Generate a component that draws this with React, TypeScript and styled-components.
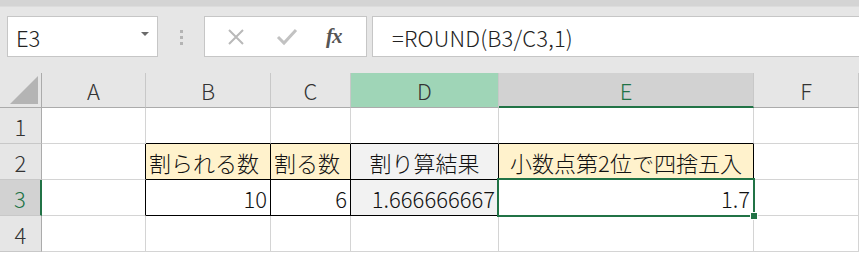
import styled, { createGlobalStyle } from 'styled-components'

const GlobalStyle = createGlobalStyle`
  html, body {
    margin: 0;
    padding: 0;
    background: #ffffff;
    overflow: hidden;
  }
  body {
    font-family: "Noto Sans CJK JP", "Noto Sans", sans-serif;
  }
`

const GREEN = '#217346'
const GRID = '#d4d4d4'

const Page = styled.div`
  width: 859px;
  height: 253px;
  display: flex;
  flex-direction: column;
  background: #e6e6e6;
`

const TopStrip = styled.div`
  height: 6px;
  background: #d4d4d4;
  border-bottom: 1px solid #dcdcdc;
`

const FormulaBar = styled.div`
  height: 66px;
  display: flex;
  align-items: flex-start;
  padding-top: 9px;
  box-sizing: border-box;
`

const NameBox = styled.div`
  margin-left: 7px;
  width: 151px;
  height: 41px;
  box-sizing: border-box;
  background: #ffffff;
  border: 1px solid #c6c6c6;
  display: flex;
  align-items: center;
  justify-content: space-between;
  padding: 0 8px 0 8px;
  font-size: 22px;
  font-weight: 300;
  color: #222;
`

const Caret = styled.span`
  width: 0;
  height: 0;
  border-left: 4px solid transparent;
  border-right: 4px solid transparent;
  border-top: 4px solid #6a6a6a;
  margin-top: -6px;
`

const Grip = styled.div`
  width: 46px;
  height: 41px;
  display: flex;
  flex-direction: column;
  align-items: center;
  justify-content: center;
  gap: 3px;
  padding-top: 2px;
  box-sizing: border-box;
`

const GripDot = styled.span`
  width: 3px;
  height: 3px;
  background: #b4b4b4;
`

const ButtonBox = styled.div`
  width: 163px;
  height: 41px;
  box-sizing: border-box;
  background: #ffffff;
  border: 1px solid #c6c6c6;
  display: flex;
  align-items: center;
  padding-left: 21px;
  gap: 30px;
`

const FxLabel = styled.span`
  font-family: "Liberation Serif", "DejaVu Serif", serif;
  font-style: italic;
  font-weight: bold;
  font-size: 21px;
  color: #555;
  margin-left: -2px;
  letter-spacing: -1px;
`

const FormulaInput = styled.div`
  margin-left: 5px;
  flex: 1;
  height: 41px;
  box-sizing: border-box;
  background: #ffffff;
  border: 1px solid #c6c6c6;
  border-right: none;
  display: flex;
  align-items: center;
  padding-left: 19px;
  font-size: 22px;
  font-weight: 300;
  color: #222;
  letter-spacing: 0.2px;
`

const Sheet = styled.div`
  flex: 1;
  display: grid;
  grid-template-columns: 42px 104px 125px 80px 148px 255px 1fr;
  grid-template-rows: 35px repeat(4, 36px);
  background: #ffffff;
`

const Corner = styled.div`
  background: #e6e6e6;
  border-right: 1px solid #ababab;
  border-bottom: 1px solid #ababab;
  position: relative;
  box-sizing: border-box;
`

const CornerTriangle = styled.div`
  position: absolute;
  right: 3px;
  bottom: 3px;
  width: 0;
  height: 0;
  border-left: 28px solid transparent;
  border-bottom: 28px solid #b4b4b4;
`

type HeadProps = { $state?: 'normal' | 'range' | 'active' }

const ColHead = styled.div<HeadProps>`
  box-sizing: border-box;
  display: flex;
  align-items: center;
  justify-content: center;
  font-size: 22px;
  font-weight: 300;
  background: ${(p) =>
    p.$state === 'range' ? '#9fd5b7' : p.$state === 'active' ? '#d2d2d2' : '#e6e6e6'};
  color: ${(p) => (p.$state === 'active' ? GREEN : '#333')};
  border-right: 1px solid #c8c8c8;
  border-bottom: ${(p) => (p.$state === 'active' ? `2px solid ${GREEN}` : '1px solid #ababab')};
`

const RowHead = styled.div<HeadProps>`
  box-sizing: border-box;
  display: flex;
  align-items: center;
  justify-content: center;
  font-size: 22px;
  font-weight: 300;
  background: ${(p) => (p.$state === 'active' ? '#d2d2d2' : '#e6e6e6')};
  color: ${(p) => (p.$state === 'active' ? GREEN : '#333')};
  border-bottom: 1px solid #c8c8c8;
  border-right: ${(p) => (p.$state === 'active' ? `2px solid ${GREEN}` : '1px solid #ababab')};
`

type CellProps = {
  $fill?: string
  $align?: 'left' | 'center' | 'right'
  $right?: string
  $bottom?: string
}

const Cell = styled.div<CellProps>`
  box-sizing: border-box;
  position: relative;
  display: flex;
  align-items: center;
  justify-content: ${(p) =>
    p.$align === 'right' ? 'flex-end' : p.$align === 'center' ? 'center' : 'flex-start'};
  padding: 0 3px;
  font-size: 22px;
  font-weight: 300;
  color: #111;
  white-space: nowrap;
  background: ${(p) => p.$fill || '#ffffff'};
  border-right: 1px solid ${(p) => p.$right || GRID};
  border-bottom: 1px solid ${(p) => p.$bottom || GRID};
`

const Selection = styled.div`
  position: absolute;
  z-index: 2;
  left: -2px;
  top: -2px;
  right: -2px;
  bottom: -2px;
  border: 2px solid ${GREEN};
  pointer-events: none;
`

const FillHandle = styled.div`
  position: absolute;
  z-index: 3;
  right: -5px;
  bottom: -5px;
  width: 6px;
  height: 6px;
  background: ${GREEN};
  border: 1px solid #ffffff;
`

const XIcon = () => (
  <svg width="20" height="20" viewBox="0 0 20 20">
    <path d="M3 3 L17 17 M17 3 L3 17" stroke="#b9b9b9" strokeWidth="2" fill="none" />
  </svg>
)

const CheckIcon = () => (
  <svg width="22" height="20" viewBox="0 0 22 20">
    <path d="M2 10 L8 16 L20 3" stroke="#c2c2c2" strokeWidth="3" fill="none" />
  </svg>
)

const BLACK = '#000000'
const YELLOW = '#fff2cc'
const GRAY = '#f2f2f2'

export default function App() {
  const cols = ['A', 'B', 'C', 'D', 'E', 'F']
  return (
    <>
      <GlobalStyle />
      <Page>
        <TopStrip />
        <FormulaBar>
          <NameBox>
            <span>E3</span>
            <Caret />
          </NameBox>
          <Grip>
            <GripDot />
            <GripDot />
            <GripDot />
          </Grip>
          <ButtonBox>
            <XIcon />
            <CheckIcon />
            <FxLabel>fx</FxLabel>
          </ButtonBox>
          <FormulaInput>=ROUND(B3/C3,1)</FormulaInput>
        </FormulaBar>
        <Sheet>
          <Corner>
            <CornerTriangle />
          </Corner>
          {cols.map((c) => (
            <ColHead key={c} $state={c === 'D' ? 'range' : c === 'E' ? 'active' : 'normal'}>
              {c}
            </ColHead>
          ))}

          <RowHead>1</RowHead>
          <Cell />
          <Cell $bottom={BLACK} />
          <Cell $bottom={BLACK} />
          <Cell $bottom={BLACK} />
          <Cell $bottom={BLACK} />
          <Cell />

          <RowHead>2</RowHead>
          <Cell $right={BLACK} />
          <Cell $fill={YELLOW} $right={BLACK} $bottom={BLACK}>割られる数</Cell>
          <Cell $fill={YELLOW} $right={BLACK} $bottom={BLACK}>割る数</Cell>
          <Cell $fill={GRAY} $right={BLACK} $bottom={BLACK} $align="center">割り算結果</Cell>
          <Cell $fill={YELLOW} $right={BLACK} $bottom={BLACK} $align="center">小数点第2位で四捨五入</Cell>
          <Cell />

          <RowHead $state="active">3</RowHead>
          <Cell $right={BLACK} />
          <Cell $right={BLACK} $bottom={BLACK} $align="right">10</Cell>
          <Cell $right={BLACK} $bottom={BLACK} $align="right">6</Cell>
          <Cell $fill={GRAY} $right={BLACK} $bottom={BLACK} $align="right">1.666666667</Cell>
          <Cell $right={BLACK} $bottom={BLACK} $align="right">
            1.7
            <Selection />
            <FillHandle />
          </Cell>
          <Cell />

          <RowHead>4</RowHead>
          <Cell />
          <Cell />
          <Cell />
          <Cell />
          <Cell />
          <Cell />
        </Sheet>
      </Page>
    </>
  )
}
